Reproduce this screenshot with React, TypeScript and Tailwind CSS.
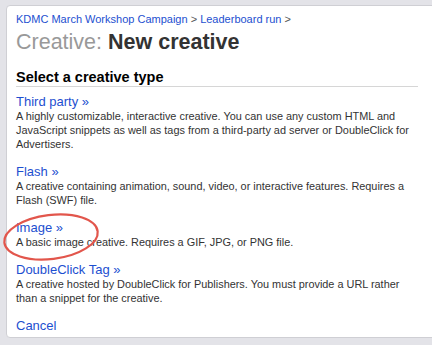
const ITEMS = [
  {
    title: "Third party »",
    lines: [
      "A highly customizable, interactive creative. You can use any custom HTML and",
      "JavaScript snippets as well as tags from a third-party ad server or DoubleClick for",
      "Advertisers.",
    ],
  },
  {
    title: "Flash »",
    lines: [
      "A creative containing animation, sound, video, or interactive features. Requires a",
      "Flash (SWF) file.",
    ],
  },
  {
    title: "Image »",
    lines: ["A basic image creative. Requires a GIF, JPG, or PNG file."],
  },
  {
    title: "DoubleClick Tag »",
    lines: [
      "A creative hosted by DoubleClick for Publishers. You must provide a URL rather",
      "than a snippet for the creative.",
    ],
  },
]

export default function App() {
  return (
    <div
      className="relative w-[432px] h-[345px] overflow-hidden bg-[#e3e3e8] pt-[5px] pl-[6px]"
      style={{ fontFamily: '"Liberation Sans", Arial, sans-serif' }}
    >
      {/* card, runs off the right edge */}
      <div className="w-[440px] h-[333px] bg-white border border-[#cfcfd4] rounded-l-[4px] pl-[9px] pt-[5px]">
        <div className="w-[402px]">
          <div className="text-[11px] leading-[16px] text-[#1d4fd0]">
            KDMC March Workshop Campaign <span className="text-[#555]">&gt;</span> Leaderboard run{" "}
            <span className="text-[#555]">&gt;</span>
          </div>
          <h1 className="mt-[2px] text-[21.5px] leading-[26px]">
            <span className="text-[#999]">Creative: </span>
            <span className="font-bold text-[#333]">New creative</span>
          </h1>

          <h2 className="mt-[14px] text-[14.5px] leading-[17px] font-bold text-black border-b border-[#d6d6d6]">
            Select a creative type
          </h2>

          <div className="mt-[7px] flex flex-col gap-[13px]">
            {ITEMS.map((item) => (
              <div key={item.title}>
                <div className="text-[13px] leading-[15px] text-[#1d4fd0]">{item.title}</div>
                <div className="text-[10.9px] leading-[14px] text-[#333]">
                  {item.lines.map((l) => (
                    <div key={l} className="whitespace-nowrap">{l}</div>
                  ))}
                </div>
              </div>
            ))}
            <div className="text-[13px] leading-[15px] text-[#1d4fd0]">Cancel</div>
          </div>
        </div>
      </div>

      {/* red hand-drawn highlight around "Image" */}
      <svg className="absolute left-0 top-[205px]" width="110" height="64" viewBox="0 0 110 64">
        <ellipse
          cx="51"
          cy="32"
          rx="47"
          ry="22"
          transform="rotate(-7 51 32)"
          fill="none"
          stroke="#e2564c"
          strokeWidth="2.2"
        />
      </svg>
    </div>
  )
}
